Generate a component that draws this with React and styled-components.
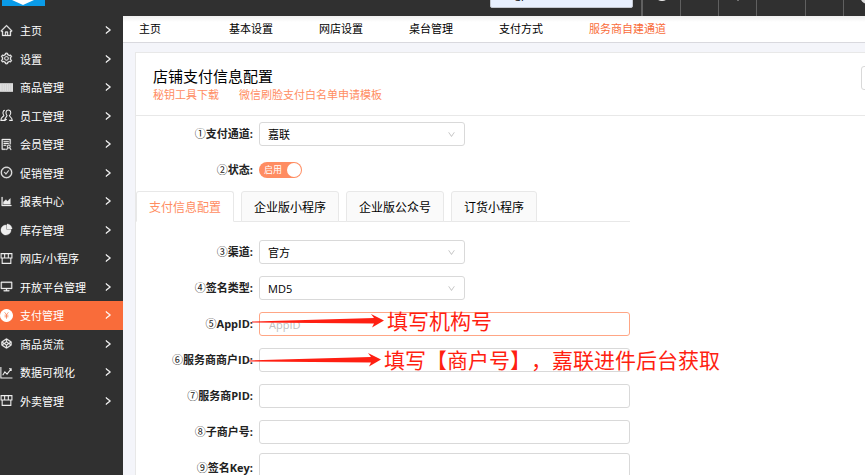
import React from "react";
import styled, { createGlobalStyle } from "styled-components";
import {
  AiOutlineHome, AiOutlineSetting, AiOutlineSolution, AiOutlineCheckCircle,
  AiOutlineAreaChart, AiFillPieChart, AiOutlineDesktop,
  AiOutlineCodepen, AiOutlineRight, AiOutlineDown,
} from "react-icons/ai";

const accent = "#f96c3a";
const line = "#e8e8e8";

const GlobalStyle = createGlobalStyle`
  * { box-sizing: border-box; }
  body { margin: 0; overflow: hidden; }
  body, button, input, select, textarea {
    font-family: "Open Sans", "Noto Sans CJK SC", sans-serif;
    font-size: 11px;
    color: #000;
  }
`;

const Page = styled.div`
  display: flex;
  flex-direction: column;
  height: 100vh;
  background: #f4f5fa;
`;

const TopBar = styled.header`
  display: flex;
  align-items: flex-end;
  flex: none;
  height: 16px;
  overflow: hidden;
  background: #303030;
`;

const Logo = styled.svg`
  flex: none;
  width: 43px;
  height: 6px;
  margin: 0 auto 10px 2px;
`;

const Search = styled.input`
  width: 143px;
  height: 32px;
  margin: 0 8px 8px 0;
  padding: 3px 24px 0;
  border: 1px solid #c4c8d0;
  border-radius: 2px;
  background: #e8f0fe;
`;

const BarButton = styled.button`
  display: flex;
  align-items: flex-end;
  justify-content: center;
  flex: none;
  width: ${(p) => p.$width}px;
  height: 48px;
  padding: 0 0 15px;
  border: 0;
  border-left: ${(p) => (p.$strong ? 2 : 1)}px solid #606060;
  background: none;
  svg { flex: none; width: 16px; height: 16px; }
`;

const AccountButton = styled(BarButton)`
  justify-content: flex-start;
  padding: 0 0 12px 16px;
  overflow: hidden;
`;

const Body = styled.div`
  display: flex;
  flex: 1;
  min-height: 0;
`;

const Sidebar = styled.nav`
  flex: none;
  width: 123px;
  background: #303030;
`;

const Menu = styled.ul`
  display: grid;
  grid-auto-rows: 1fr;
  height: 399px;
  margin: 0;
  padding: 0;
  list-style: none;
`;

const MenuLink = styled.a`
  display: flex;
  align-items: center;
  gap: 7px;
  height: 100%;
  padding-right: 10px;
  background: ${(p) => (p.$active ? accent : "transparent")};
  color: #fff;
  text-decoration: none;
  span { flex: 1; }
`;

const MenuIcon = styled.svg`
  flex: none;
  width: 13px;
  height: 13px;
  color: #eee;
  stroke-width: ${(p) => p.$stroke || 25};
  stroke: currentColor;
`;

const Chevron = styled(AiOutlineRight)`
  width: 10px;
  height: 10px;
  stroke: currentColor;
  stroke-width: 50;
`;

const Main = styled.main`
  flex: 1;
  min-width: 0;
  overflow: hidden;
`;

const SubNav = styled.nav`
  display: grid;
  grid-auto-flow: column;
  grid-auto-columns: 90px;
  align-items: center;
  height: 27px;
  padding: 0 0 2px 16px;
  border-bottom: 1px solid #d9d9de;
  background: linear-gradient(#efefef, #fff 6px);
`;

const SubLink = styled.a`
  color: ${(p) => (p.$active ? accent : "#000")};
  text-decoration: none;
  white-space: nowrap;
`;

const Card = styled.section`
  width: calc(100% + 60px);
  height: 600px;
  margin: 9px 0 0 12px;
  border: 1px solid ${line};
  background: #fff;
`;

const CardHeader = styled.header`
  display: flex;
  justify-content: space-between;
  height: 63px;
  padding: 13px 19px 0 17px;
  border-bottom: 1px solid ${line};
`;

const Title = styled.h1`
  margin: 0;
  font-size: 15px;
  line-height: 20px;
  font-weight: 400;
`;

const Links = styled.div`
  display: flex;
  gap: 20px;
  line-height: 18px;
`;

const OrangeLink = styled.a`
  color: #ff8d62;
  text-decoration: none;
`;

const HeaderButton = styled.button`
  width: 56px;
  height: 24px;
  border: 1px solid #d9d9d9;
  border-radius: 3px;
  background: #fff;
`;

const Form = styled.form`
  max-width: 494px;
  padding-top: 6px;
`;

const Fields = styled.div`
  display: grid;
  gap: 12px;
`;

const Row = styled.div`
  position: relative;
  display: grid;
  grid-template-columns: 123px 1fr;
  align-items: ${(p) => (p.$top ? "start" : "center")};
  min-height: 24px;
`;

const Label = styled.label`
  padding-right: 6px;
  line-height: 24px;
  text-align: right;
  font-weight: 700;
  color: #222;
  white-space: nowrap;
`;

const Number = styled.span`
  font-weight: 400;
`;

const SelectBox = styled.div`
  display: grid;
  align-items: center;
  width: 206px;
  > * { grid-area: 1 / 1; }
  svg { justify-self: end; margin-right: 9px; width: 9px; height: 9px; color: #bfbfbf; pointer-events: none; }
`;

const Select = styled.select`
  width: 100%;
  height: 24px;
  padding: 0 8px;
  border: 1px solid #d9d9d9;
  border-radius: 3px;
  background: #fff;
  appearance: none;
`;

const TextBox = styled.input`
  width: 100%;
  height: 24px;
  padding: 0 9px;
  border: 1px solid ${(p) => (p.$active ? "#ffa685" : "#d9d9d9")};
  border-radius: 3px;
  background: #fff;
  outline: none;
  &::placeholder { color: #bfbfbf; }
`;

const KeyBox = styled.textarea`
  display: block;
  width: 100%;
  height: 60px;
  margin-top: -3px;
  border: 1px solid #d9d9d9;
  border-radius: 3px;
  resize: none;
`;

const Switch = styled.button`
  display: flex;
  align-items: center;
  justify-content: space-between;
  width: 43px;
  height: 16px;
  padding: 0 1px 0 5px;
  border: 0;
  border-radius: 8px;
  background: #ff8d62;
  color: #fff;
  font-size: 9px;
  line-height: 16px;
`;

const Knob = styled.span`
  width: 14px;
  height: 14px;
  border-radius: 50%;
  background: #fff;
`;

const Tabs = styled.div`
  display: flex;
  gap: 7px;
  margin: 9px 0 18px;
  border-bottom: 1px solid ${line};
`;

const Tab = styled.button`
  height: 31px;
  margin-bottom: -1px;
  padding: 0 12px;
  border: 1px solid ${line};
  border-bottom-color: ${(p) => (p.$active ? "#fff" : line)};
  border-radius: 3px 3px 0 0;
  background: ${(p) => (p.$active ? "#fff" : "#fafafa")};
  color: ${(p) => (p.$active ? "#ff8d62" : "#000")};
  font-size: 12px;
  white-space: nowrap;
`;

const Note = styled.div`
  position: absolute;
  top: 0;
  left: ${(p) => p.$left}px;
  display: flex;
  align-items: center;
  gap: 3px;
  color: #ff1f12;
  font-size: 21px;
  line-height: ${(p) => p.$height}px;
  white-space: nowrap;
  text-spacing-trim: space-all;
  pointer-events: none;
  svg { flex: none; }
`;

const SmallIcon = ({ children, ...rest }) => (
  <MenuIcon viewBox="0 0 12 12" fill="none" $stroke={1} {...rest}>{children}</MenuIcon>
);

const Barcode = () => (
  <SmallIcon>
    <path d="M0 2h12v8H0z" fill="#ddd" stroke="none" />
    <path d="M2 2v8M4 2v8M6 2v8M8 2v8M10 2v8" stroke="#c8c8c8" strokeWidth=".5" />
  </SmallIcon>
);

const Shop = () => (
  <SmallIcon><path d="M1 1.500h10v4H1zM4.300 1.500v4M7.700 1.500v4M2 5.500v5h8v-5" /></SmallIcon>
);

const People = () => (
  <SmallIcon>
    <path d="M4.500 1.200c-2 0-2.300 3.300-.9 4.800C3 7.500.8 7.200.8 10.500H5" />
    <path d="M7.500.9c3 0 3 3.800 1.200 5.300.4 1.500 2.600 1.600 2.600 4.300H8.500M7.500.9c-2.400 0-2.500 3.600-1 5.200C6 7.500 4.500 8 4.300 10.500l2-1" />
  </SmallIcon>
);

const Pay = () => (
  <SmallIcon>
    <circle cx="6" cy="6" r="5.500" fill="#fff" stroke="#fff" />
    <path d="M4.200 3 6 5.200 7.800 3M6 5.200V9M4.200 5.700h3.600M4.200 7.200h3.600" stroke="#f96c3a" strokeWidth=".6" />
  </SmallIcon>
);

const Trend = () => (
  <SmallIcon><path d="M.8 1v10h10.700M2.500 8.500l2-3 2 2L10 3M8.300 2.500h2v2" /></SmallIcon>
);

const menu = [
  [AiOutlineHome, "主页"],
  [AiOutlineSetting, "设置"],
  [Barcode, "商品管理"],
  [People, "员工管理"],
  [AiOutlineSolution, "会员管理"],
  [AiOutlineCheckCircle, "促销管理"],
  [AiOutlineAreaChart, "报表中心"],
  [AiFillPieChart, "库存管理"],
  [Shop, "网店/小程序"],
  [AiOutlineDesktop, "开放平台管理"],
  [Pay, "支付管理"],
  [AiOutlineCodepen, "商品货流"],
  [Trend, "数据可视化"],
  [Shop, "外卖管理"],
];

const custom = [Barcode, People, Shop, Pay, Trend];
const subNav = ["主页", "基本设置", "网店设置", "桌台管理", "支付方式", "服务商自建通道"];
const tabs = ["支付信息配置", "企业版小程序", "企业版公众号", "订货小程序"];

function Field({ id, number, label, top, note, children }) {
  return (
    <Row $top={top}>
      <Label htmlFor={id}><Number>{number}</Number>{label}:</Label>
      {children}
      {note}
    </Row>
  );
}

function Dropdown({ id, value }) {
  return (
    <SelectBox>
      <Select id={id} defaultValue={value}><option>{value}</option></Select>
      <AiOutlineDown />
    </SelectBox>
  );
}

function Arrow() {
  return (
    <svg width="132" height="16" viewBox="0 0 132 16" fill="#ff1f12">
      <path d="M0 8.500 122 5 119 1 132 7.500 120 14.500 122 10.500 0 9.500Z" />
    </svg>
  );
}

export default function App() {
  return (
    <Page>
      <GlobalStyle />
      <TopBar>
        <Logo viewBox="0 0 43 6">
          <path d="M0 0h43v6H0z" fill="#0a9be8" />
          <path d="M10 0h22L21 5z" fill="#fff" />
        </Logo>
        <Search aria-label="搜索" defaultValue="gp" />
        <BarButton $width={39} $strong aria-label="帮助">
          <svg viewBox="0 0 16 16"><circle cx="8" cy="8" r="7" fill="none" stroke="#eee" strokeWidth="2" /></svg>
        </BarButton>
        <BarButton $width={38} aria-label="消息" />
        <BarButton $width={38} aria-label="下载">
          <svg viewBox="0 0 16 16"><path d="M2 8h12l-6 8z" fill="#ddd" /></svg>
        </BarButton>
        <BarButton $width={49} aria-label="语言" />
        <BarButton $width={38} aria-label="全屏" />
        <AccountButton $width={22} aria-label="账户">
          <svg viewBox="0 0 16 16"><circle cx="8" cy="8" r="8" fill="#ddd" /></svg>
        </AccountButton>
      </TopBar>
      <Body>
        <Sidebar>
          <Menu>
            {menu.map(([Icon, text]) => (
              <li key={text}>
                <MenuLink href="#" $active={text === "支付管理"}>
                  {custom.includes(Icon) ? <Icon /> : <MenuIcon as={Icon} />}
                  <span>{text}</span><Chevron />
                </MenuLink>
              </li>
            ))}
          </Menu>
        </Sidebar>
        <Main>
          <SubNav>
            {subNav.map((t, i) => <SubLink key={t} href="#" $active={i === 5}>{t}</SubLink>)}
          </SubNav>
          <Card>
            <CardHeader>
              <div>
                <Title>店铺支付信息配置</Title>
                <Links>
                  <OrangeLink href="#">秘钥工具下载</OrangeLink>
                  <OrangeLink href="#">微信刷脸支付白名单申请模板</OrangeLink>
                </Links>
              </div>
              <HeaderButton type="button" aria-label="返回" />
            </CardHeader>
            <Form>
              <Fields>
                <Field id="pay" number="①" label="支付通道"><Dropdown id="pay" value="嘉联" /></Field>
                <Field id="state" number="②" label="状态">
                  <Switch id="state" type="button" role="switch" aria-checked="true">启用<Knob /></Switch>
                </Field>
              </Fields>
              <Tabs role="tablist">
                {tabs.map((t, i) => (
                  <Tab key={t} type="button" role="tab" aria-selected={i === 0} $active={i === 0}>{t}</Tab>
                ))}
              </Tabs>
              <Fields>
                <Field id="channel" number="③" label="渠道"><Dropdown id="channel" value="官方" /></Field>
                <Field id="sign" number="④" label="签名类型"><Dropdown id="sign" value="MD5" /></Field>
                <Field id="app" number="⑤" label="AppID"
                  note={<Note $left={116} $height={18}><Arrow />填写机构号</Note>}>
                  <TextBox id="app" placeholder="AppID" $active />
                </Field>
                <Field id="merchant" number="⑥" label="服务商商户ID"
                  note={<Note $left={113} $height={24}><Arrow />填写【商户号】，嘉联进件后台获取</Note>}>
                  <TextBox id="merchant" />
                </Field>
                <Field id="pid" number="⑦" label="服务商PID"><TextBox id="pid" /></Field>
                <Field id="sub" number="⑧" label="子商户号"><TextBox id="sub" /></Field>
                <Field id="key" number="⑨" label="签名Key" top><KeyBox id="key" /></Field>
              </Fields>
            </Form>
          </Card>
        </Main>
      </Body>
    </Page>
  );
}
